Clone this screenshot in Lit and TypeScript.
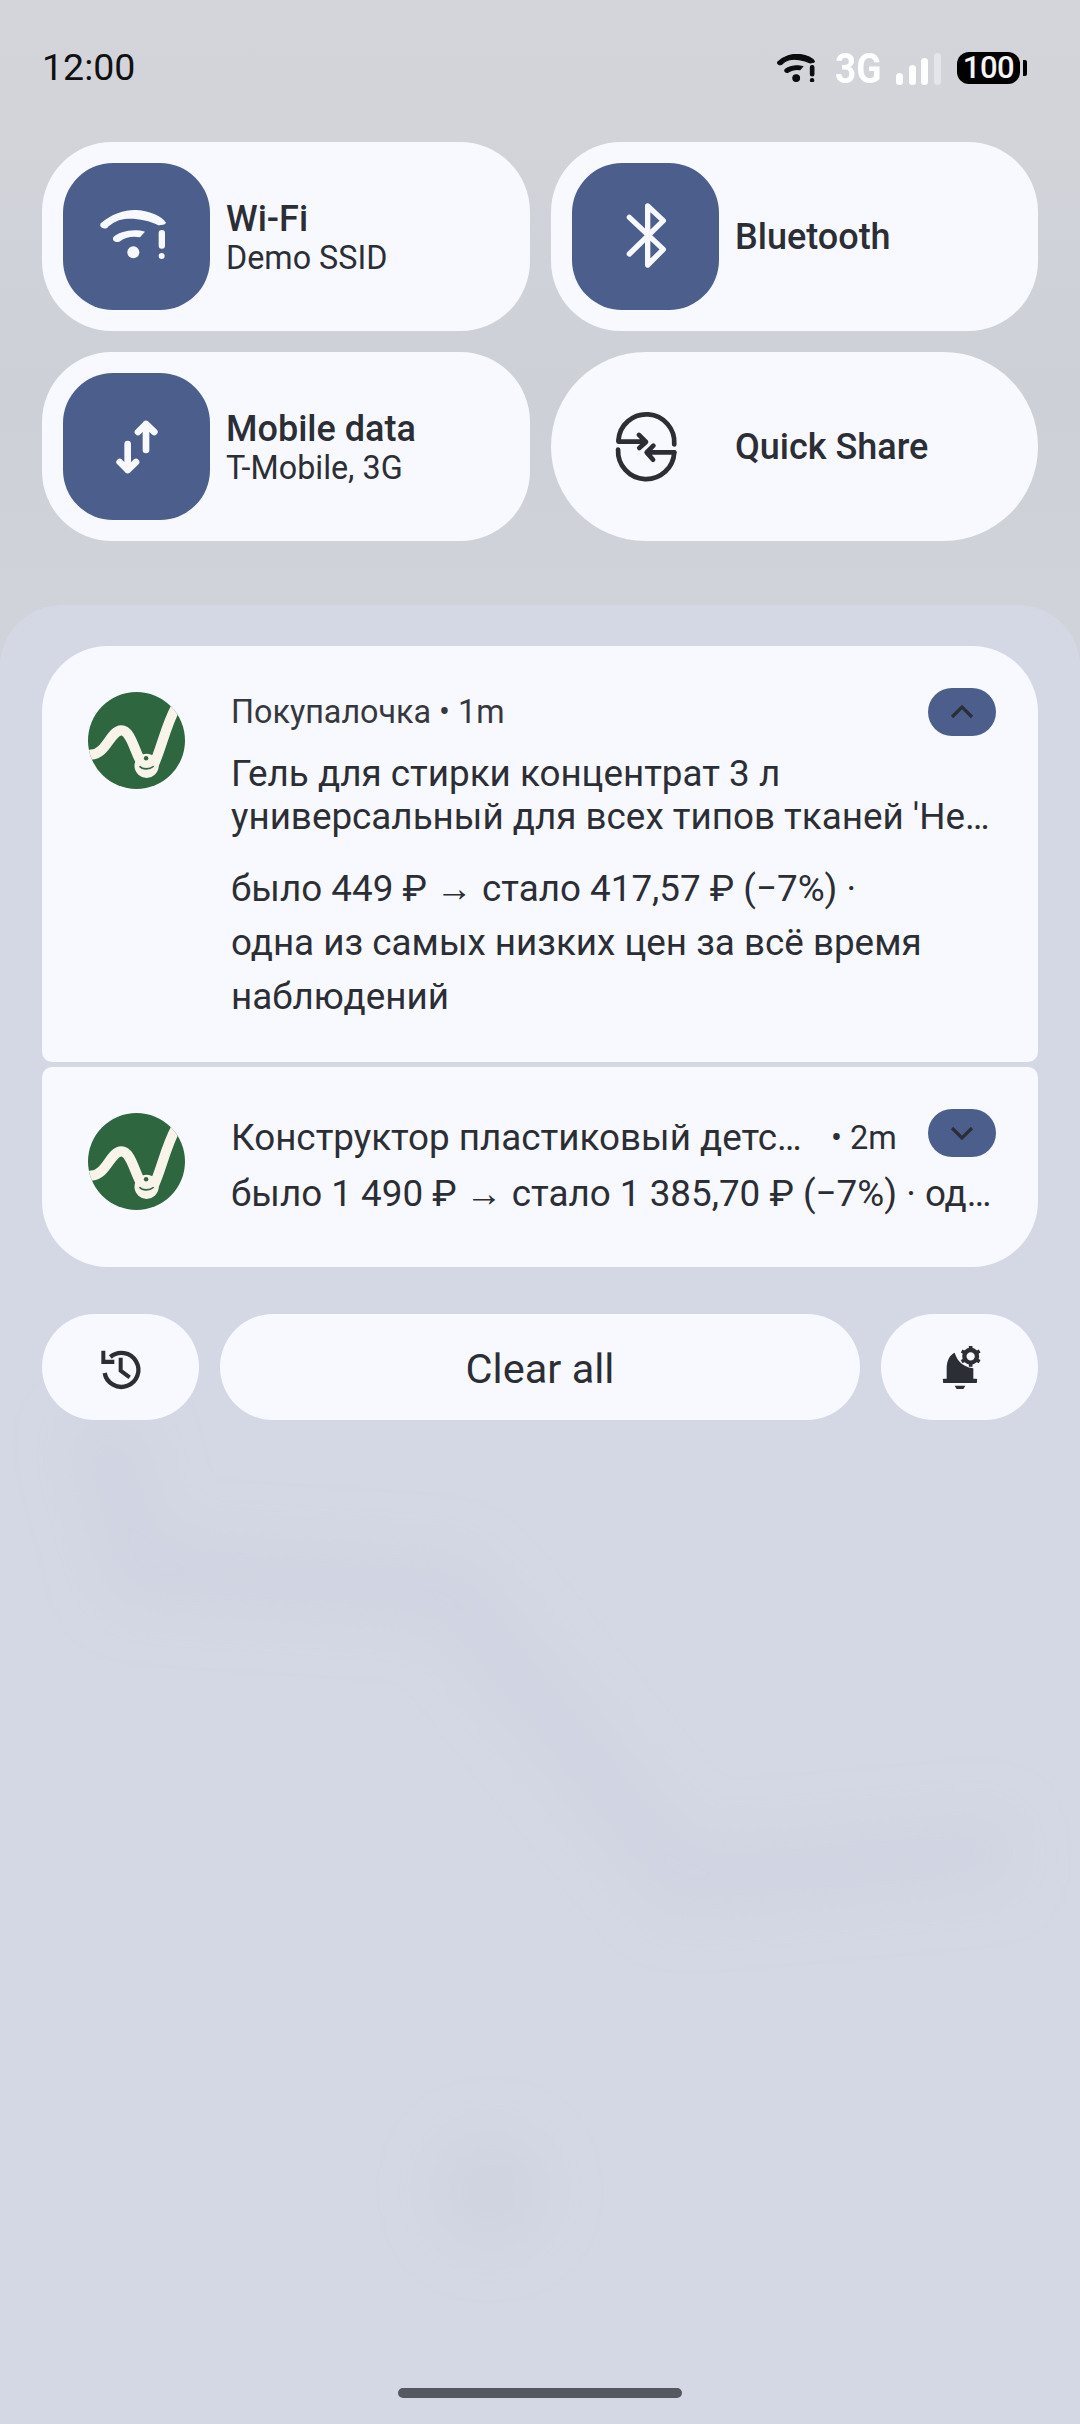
import { LitElement, html, css, svg } from "lit";
import { customElement } from "lit/decorators.js";

const wifiPaths = svg`
  <path d="M212 280C245 250 290 238 320 240C360 243 395 258 408 278C404 286 395 284 385 286C350 268 300 262 270 270C255 274 240 285 232 293C222 300 206 292 212 280Z"/>
  <path d="M250 322C265 305 310 295 345 305L330 322C305 318 285 322 268 335C255 340 245 330 250 322Z"/>
  <circle cx="310" cy="367" r="18"/>
  <rect x="386" y="300" width="19" height="56" rx="9"/>
  <circle cx="395" cy="378" r="9"/>`;

const logo = html`<svg class="logo" viewBox="0 0 96 96">
  <defs><clipPath id="lc"><circle cx="48" cy="48" r="48"/></clipPath></defs>
  <circle cx="48" cy="48" r="48" fill="#2e6640"/>
  <g clip-path="url(#lc)" fill="none" stroke="#f8f4e9" stroke-linecap="round">
    <path stroke-width="10" d="M3 62C18 62 22 38 33 38C43 38 46 60 54 72"/>
    <path stroke-width="10" d="M65 72C72 58 77 33 87 15"/>
  </g>
  <circle cx="58" cy="73" r="12" fill="#f8f4e9"/>
  <circle cx="57.500" cy="65.500" r="2.200" fill="#2e6640"/>
  <path d="M51 73.500C54 77 61 77 65 73.500" fill="none" stroke="#2e6640" stroke-width="1.600"/>
</svg>`;

const arrow = html`<span class="arr">→</span>`;

@customElement("app-root")
export class AppRoot extends LitElement {
  static styles = css`
    :host { display: block; width: 1080px; height: 2424px; overflow: hidden; font-family: Roboto, "Noto Sans", sans-serif; color: #2c2e36; }
    * { box-sizing: border-box; }
    .page { position: relative; height: 2424px; display: flex; flex-direction: column;
      background: linear-gradient(#d3d5db 0, #d2d4da 120px, #cdd0d7 400px, #d0d3da 620px); }
    .status { height: 142px; padding: 0 53px 6px 42px; display: flex; align-items: center; justify-content: space-between; }
    .clock { font-size: 37.500px; color: #111; line-height: 1; }
    .sys { display: flex; align-items: center; }
    .sys-wifi { width: 38px; height: 28px; margin-right: 20px; fill: #0c0c0e; stroke: #0c0c0e; stroke-width: 6; }
    .net { width: 45px; font-size: 43px; line-height: 36px; font-weight: 700; color: #fff; margin-right: 16px; transform: scaleX(.86); transform-origin: left center; white-space: nowrap; }
    .bars { display: flex; align-items: flex-end; gap: 5.700px; height: 32px; margin-right: 16px; margin-top: 1px; }
    .bars i { display: block; width: 7px; border-radius: 3.500px; background: #fff; }
    .bars i:nth-child(1) { height: 12px; }
    .bars i:nth-child(2) { height: 20px; }
    .bars i:nth-child(3) { height: 27px; }
    .bars i:nth-child(4) { height: 32px; background: rgba(255,255,255,.4); }
    .batt { width: 63px; height: 32px; background: #000; border-radius: 12px; color: #f4f4f4; font-size: 31px; font-weight: 500; line-height: 32px; text-align: center; letter-spacing: -.5px; }
    .nub { width: 4px; height: 16px; background: #000; margin-left: 3px; border-radius: 0 2px 2px 0; }

    .tiles { display: grid; grid-template-columns: 488px 487px; grid-auto-rows: 189px; gap: 21px; padding: 0 42px; }
    .tile { background: #f8f9ff; border-radius: 70px; display: flex; align-items: center; padding-left: 21px; }
    .tile.round { border-radius: 95px; }
    .ico { width: 147px; height: 147px; flex: none; }
    .tile-ico { background: #4c5f8c; border-radius: 50px; fill: #f8f9ff; }
    .plain { display: flex; align-items: center; justify-content: center; width: 147px; flex: none; }
    .qs { width: 74px; height: 74px; fill: none; stroke: #2c2e36; stroke-width: 14; stroke-linecap: round; stroke-linejoin: round; }
    .tile-text { margin-left: 16px; display: flex; flex-direction: column; }
    .t1 { font-size: 36px; font-weight: 500; line-height: 42px; }
    .t2 { font-size: 32.300px; line-height: 36px; }

    .panel { position: relative; flex: 1; margin-top: 64px; padding: 41px 42px 26px; border-radius: 62px 62px 0 0; background: #d4d8e4; display: flex; flex-direction: column; overflow: hidden; }
    .wall { position: absolute; left: 0; top: 0; width: 1080px; height: 1819px; pointer-events: none; }
    .cards, .actions, .home { position: relative; }
    .cards { display: flex; flex-direction: column; gap: 5px; }
    .card { position: relative; background: #f8f9ff; display: flex; padding-left: 46px; }
    .card.top { border-radius: 66px 66px 10px 10px; height: 416px; padding-top: 46px; }
    .card.bot { border-radius: 10px 10px 66px 66px; height: 200px; padding-top: 46px; }
    .logo { width: 97px; height: 97px; flex: none; margin-right: 46px; }
    .col { width: 770px; min-width: 0; }
    .meta { font-size: 32.300px; line-height: 40px; color: #36383f; }
    .title { margin-top: 20px; font-size: 36.800px; line-height: 43px; white-space: nowrap; }
    .body { margin-top: 24px; font-size: 36.800px; line-height: 54px; width: 700px; }
    .arr { font-family: "Liberation Serif", serif; }
    .bot .col { padding-top: 3px; }
    .row { display: flex; font-size: 36.800px; line-height: 44px; white-space: nowrap; }
    .ell { width: 585px; }
    .when { margin-left: 15px; font-size: 32.500px; }
    .bot .body { margin-top: 7px; width: 772px; white-space: nowrap; }
    .chev { position: absolute; right: 42px; top: 42px; width: 68px; height: 48px; border-radius: 24px; background: #4c5f8c; display: flex; align-items: center; justify-content: center; }
    .chev svg { width: 24px; height: 14px; fill: none; stroke: #2c2e36; stroke-width: 3.200; }

    .actions { margin-top: 47px; display: grid; grid-template-columns: 157px 640px 157px; gap: 21px; height: 106px; }
    .btn { background: #f8f9ff; border-radius: 53px; display: flex; align-items: center; justify-content: center; font-size: 41.500px; }
    .btn.label { padding-top: 2px; }
    .btn svg { width: 60px; height: 60px; }
    .home { margin: auto auto 0; width: 284px; height: 10px; border-radius: 5px; background: #55585f; }
  `;

  render() {
    return html`<div class="page">
      <div class="status">
        <div class="clock">12:00</div>
        <div class="sys">
          <svg class="sys-wifi" viewBox="208 238 202 150">${wifiPaths}</svg>
          <div class="net">3G</div>
          <div class="bars"><i></i><i></i><i></i><i></i></div>
          <div class="batt">100</div>
          <div class="nub"></div>
        </div>
      </div>

      <div class="tiles">
        <div class="tile">
          <svg class="ico tile-ico" viewBox="99 99 441 441">${wifiPaths}</svg>
          <div class="tile-text"><div class="t1">Wi-Fi</div><div class="t2">Demo SSID</div></div>
        </div>
        <div class="tile">
          <svg class="ico tile-ico" viewBox="96 99 441 441">
            <path fill="none" stroke="#f8f9ff" stroke-width="16" stroke-linecap="round" stroke-linejoin="round" d="M268 262L370 358L323 405V228L370 272L268 372"/>
          </svg>
          <div class="tile-text"><div class="t1">Bluetooth</div></div>
        </div>
        <div class="tile">
          <svg class="ico tile-ico" viewBox="99 729 441 441">
            <path fill="none" stroke="#f8f9ff" stroke-width="20" stroke-linecap="round" stroke-linejoin="round" d="M348 960V882M324 906L348 882L373 906M293 942V1020M269 996L293 1020L318 996"/>
          </svg>
          <div class="tile-text"><div class="t1">Mobile data</div><div class="t2">T-Mobile, 3G</div></div>
        </div>
        <div class="tile round">
          <div class="plain">
            <svg class="qs" viewBox="208 840 220 220">
              <path d="M236 930A83 83 0 0 1 402 942M402 966A83 83 0 0 1 235 958"/>
              <path d="M236 934H316M297 914L318 935L298 953M402 966H322M340 946L320 966L339 988"/>
            </svg>
          </div>
          <div class="tile-text"><div class="t1">Quick Share</div></div>
        </div>
      </div>

      <div class="panel">
        <svg class="wall" viewBox="0 0 1080 1819" fill="none">
          <defs><filter id="bl"><feGaussianBlur stdDeviation="28"/></filter></defs>
          <g filter="url(#bl)" stroke="#c6cadb" stroke-opacity=".3">
            <path stroke-width="70" d="M100 815L140 965L450 985L680 1275L1010 1245"/>
            <circle cx="490" cy="1585" r="55" fill="#c6cadb" fill-opacity=".35" stroke="none"/>
          </g>
        </svg>
        <div class="cards">
          <div class="card top">
            ${logo}
            <div class="col">
              <div class="meta">Покупалочка • 1m</div>
              <div class="title"><div>Гель для стирки концентрат 3 л</div><div>универсальный для всех типов тканей 'Не…</div></div>
              <div class="body">было 449 ₽ ${arrow} стало 417,57 ₽ (−7%) · одна из самых низких цен за всё время наблюдений</div>
            </div>
            <div class="chev"><svg viewBox="0 0 24 14"><path d="M2 12L12 2L22 12"/></svg></div>
          </div>
          <div class="card bot">
            ${logo}
            <div class="col">
              <div class="row"><div class="ell">Конструктор пластиковый детс…</div><div class="when">• 2m</div></div>
              <div class="body">было 1 490 ₽ ${arrow} стало 1 385,70 ₽ (−7%) · од…</div>
            </div>
            <div class="chev"><svg viewBox="0 0 24 14"><path d="M2 2L12 12L22 2"/></svg></div>
          </div>
        </div>

        <div class="actions">
          <div class="btn">
            <svg viewBox="0 0 180 180" fill="none" stroke="#2c2e36">
              <path stroke-width="13" d="M58 60A51 51 0 1 1 41 108"/>
              <path stroke-width="12" d="M89 62V101L116 121"/>
              <path fill="#2c2e36" stroke="none" d="M31 41H43V68H70V81H31Z"/>
            </svg>
          </div>
          <div class="btn label">Clear all</div>
          <div class="btn">
            <svg viewBox="0 0 180 180" fill="#2c2e36">
              <path d="M50 126V95C50 72 58 54 74 47C79 62 90 88 130 94V126Z"/>
              <rect x="39" y="125" width="102" height="13" rx="2"/>
              <path d="M74 146H106L100 156H80Z"/>
              <circle cx="122" cy="58" r="19" fill="none" stroke="#2c2e36" stroke-width="13"/>
              <path stroke="#2c2e36" stroke-width="11" d="M122 27V37M122 79V89M95 42L104 47M140 69L149 74M95 74L104 69M140 47L149 42"/>
            </svg>
          </div>
        </div>
        <div class="home"></div>
      </div>
    </div>`;
  }
}
